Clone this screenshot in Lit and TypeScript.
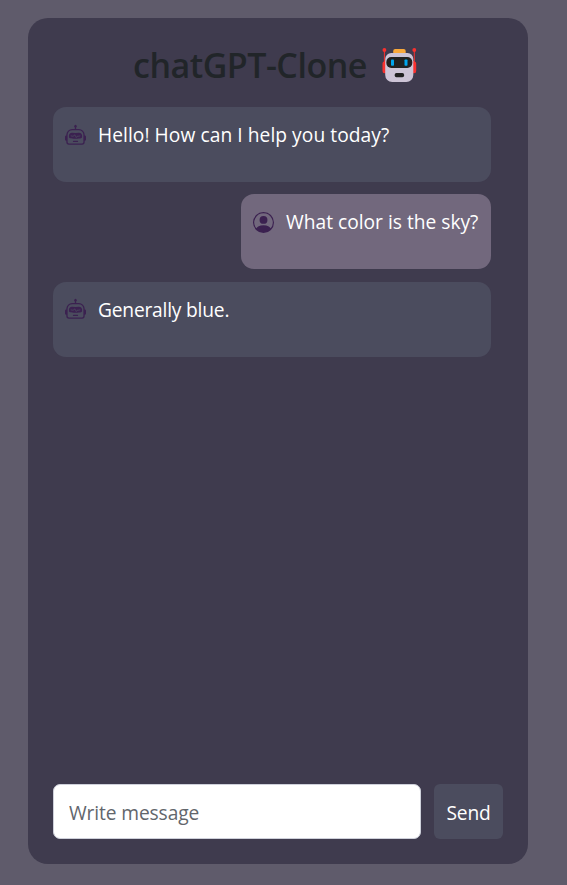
import { LitElement, html, css, svg } from "lit";
import { customElement, property, state } from "lit/decorators.js";
import { styleMap } from "lit/directives/style-map.js";

interface Message {
  from: "bot" | "user";
  text: string;
  tracking: number;
}

const robotPaths = svg`
  <path d="M6 12.5a.5.5 0 0 1 .5-.5h3a.5.5 0 0 1 0 1h-3a.5.5 0 0 1-.5-.5M3 8.062C3 6.76 4.235 5.765 5.53 5.886a26.6 26.6 0 0 0 4.94 0C11.765 5.765 13 6.76 13 8.062v1.157a.93.93 0 0 1-.765.935c-.845.147-2.34.346-4.235.346s-3.39-.2-4.235-.346A.93.93 0 0 1 3 9.219zm4.542-.827a.25.25 0 0 0-.217.068l-.92.9a25 25 0 0 1-1.871-.183.25.25 0 0 0-.068.495c.55.076 1.232.149 2.02.193a.25.25 0 0 0 .189-.071l.754-.736.847 1.71a.25.25 0 0 0 .404.062l.932-.97a25 25 0 0 0 1.922-.188.25.25 0 0 0-.068-.495c-.538.074-1.207.145-1.98.189a.25.25 0 0 0-.166.076l-.754.785-.842-1.7a.25.25 0 0 0-.182-.135"/>
  <path d="M8.5 1.866a1 1 0 1 0-1 0V3h-2A4.5 4.5 0 0 0 1 7.5V8a1 1 0 0 0-1 1v2a1 1 0 0 0 1 1v1a2 2 0 0 0 2 2h10a2 2 0 0 0 2-2v-1a1 1 0 0 0 1-1V9a1 1 0 0 0-1-1v-.5A4.5 4.5 0 0 0 10.5 3h-2zM14 7.5V13a1 1 0 0 1-1 1H3a1 1 0 0 1-1-1V7.5A3.5 3.5 0 0 1 5.5 4h5A3.5 3.5 0 0 1 14 7.5"/>`;

const personPaths = svg`
  <path d="M11 6a3 3 0 1 1-6 0 3 3 0 0 1 6 0"/>
  <path fill-rule="evenodd" d="M0 8a8 8 0 1 1 16 0A8 8 0 0 1 0 8m8-7a7 7 0 0 0-5.468 11.37C3.242 11.226 4.805 10 8 10s4.757 1.225 5.468 2.37A7 7 0 0 0 8 1"/>`;

@customElement("chat-message")
class ChatMessage extends LitElement {
  @property() from: "bot" | "user" = "bot";
  @property() text = "";
  @property({ type: Number }) tracking = 0;

  static styles = css`
    :host {
      display: flex;
      box-sizing: border-box;
      height: 75px;
      padding: 13px 12px 0;
      border-radius: 13px;
      background: #4b4c5e;
      color: #fff;
    }
    :host([from="user"]) {
      align-self: flex-end;
      width: 250px;
      background: #72687d;
    }
    .icon {
      flex: none;
      width: 21px;
      height: 21px;
      margin: 4.6px 12px 0 0;
      fill: #3b2150;
      overflow: visible;
    }
    .text {
      font-size: 19.2px;
      line-height: 30px;
      white-space: nowrap;
    }
  `;

  render() {
    return html`
      <svg class="icon" viewBox="0 0 16 16">${this.from === "bot" ? robotPaths : personPaths}</svg>
      <span class="text" style=${styleMap({ letterSpacing: `${this.tracking}px` })}>${this.text}</span>
    `;
  }
}

@customElement("app-root")
class AppRoot extends LitElement {
  @state() messages: Message[] = [
    { from: "bot", text: "Hello! How can I help you today?", tracking: 0.06 },
    { from: "user", text: "What color is the sky?", tracking: 0 },
    { from: "bot", text: "Generally blue.", tracking: -0.2 },
  ];

  static styles = css`
    :host {
      display: block;
      box-sizing: border-box;
      height: 885px;
      padding: 18px 39px 21px 28px;
      background: #5f5b6b;
      font-family: "Open Sans", "Noto Sans", sans-serif;
    }
    .panel {
      display: flex;
      flex-direction: column;
      box-sizing: border-box;
      height: 846px;
      padding: 25px;
      border-radius: 20px;
      background: #3f3b4e;
    }
    .title {
      display: flex;
      align-items: center;
      box-sizing: border-box;
      height: 44px;
      margin: 0 0 20px;
      padding-left: 80px;
      gap: 14px;
      color: #212529;
      font-size: 34px;
      font-weight: 600;
      line-height: 44px;
      white-space: nowrap;
    }
    .name {
      width: 234px;
      letter-spacing: -0.5px;
    }
    .robot {
      flex: none;
      width: 36px;
      height: 36px;
    }
    .messages {
      display: flex;
      flex: 1;
      flex-direction: column;
      gap: 12.4px;
      padding-right: 12px;
    }
    .composer {
      display: flex;
      gap: 13px;
      height: 55px;
    }
    .input {
      flex: 1;
      min-width: 0;
      box-sizing: border-box;
      padding: 1px 15px 0;
      border: 1px solid #ced0da;
      border-radius: 7px;
      background: #fff;
      color: #212529;
      font: 19.2px "Open Sans", "Noto Sans", sans-serif;
      letter-spacing: -0.12px;
    }
    .input::placeholder {
      color: #62666c;
      opacity: 1;
    }
    .send {
      width: 69px;
      padding: 1px 0 0;
      border: 0;
      border-radius: 6px;
      background: #4b4c5e;
      color: #fff;
      font: 19.2px "Open Sans", "Noto Sans", sans-serif;
      letter-spacing: -0.2px;
    }
  `;

  render() {
    return html`
      <main class="panel">
        <h1 class="title">
          <span class="name">chatGPT-Clone</span>
          <svg class="robot" viewBox="0 0 36 36">
            <g fill="#f8312f">
              <circle cx="3.4" cy="3" r="1.9"/>
              <circle cx="33.3" cy="3" r="1.9"/>
              <path d="M2.9 3h1v11h1.6v12.3H3.6A2.2 2.2 0 0 1 1.5 24v-7.5a2.2 2.2 0 0 1 1.4-2zM33.8 3h-1v11h-1.5v12.3h1.8a2.2 2.2 0 0 0 2.1-2.3v-7.5a2.2 2.2 0 0 0-1.4-2z"/>
            </g>
            <path fill="#f9a93b" d="M12.2 6.8V4a2 2 0 0 1 2-2h8.5a2 2 0 0 1 2 2v2.8z"/>
            <path fill="#cdc4d6" d="M10.5 6h16a6 6 0 0 1 5.8 6v16a7 7 0 0 1-7 7H11.2a7 7 0 0 1-7-7V12a6 6 0 0 1 6.3-6z"/>
            <rect x="5.3" y="10" width="26" height="11" rx="5" fill="#212121"/>
            <rect x="10" y="12.5" width="3" height="6.2" rx=".8" fill="#00a6ed"/>
            <rect x="23.5" y="12.5" width="3" height="6.2" rx=".8" fill="#00a6ed"/>
            <rect x="13.7" y="26" width="9.4" height="4.2" rx="1.7" fill="#212121"/>
          </svg>
        </h1>
        <section class="messages">
          ${this.messages.map(
            (m) => html`<chat-message from=${m.from} .text=${m.text} .tracking=${m.tracking}></chat-message>`
          )}
        </section>
        <form class="composer">
          <input class="input" placeholder="Write message" />
          <button class="send" type="button">Send</button>
        </form>
      </main>
    `;
  }
}
